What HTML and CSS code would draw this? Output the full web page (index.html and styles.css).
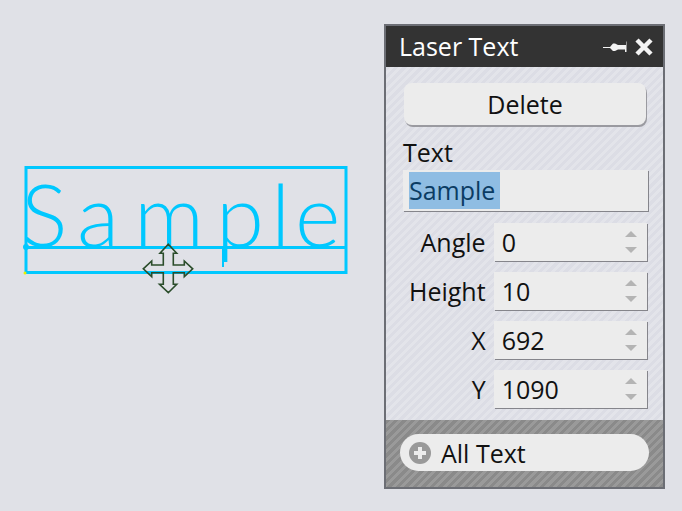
FILE: index.html
```html
<!DOCTYPE html>
<html lang="en">
<head>
<meta charset="utf-8">
<title>Laser Text</title>
<link rel="stylesheet" href="styles.css">
</head>
<body>
<main class="canvas">
  <svg class="drawing" width="682" height="511" viewBox="0 0 682 511" aria-label="Sample laser text on canvas">
    <rect class="frame" x="26" y="167.5" width="320" height="105"/>
    <line class="frame" x1="26" y1="247.5" x2="346" y2="247.5"/>
    <line class="guide" x1="223" y1="248" x2="223" y2="267"/>
    <text class="sample" x="21 77 134 216 271 295" y="247">Sample</text>
    <circle class="origin" cx="26" cy="247" r="3"/>
    <circle class="anchor" cx="25" cy="273" r="1.5"/>
    <path class="move" d="M168.3 244.3L176.7 253.3H173.3V265H184.3V261L192.7 268.8L184.3 276.7V272.7H173.3V284.3H176.7L168.3 292.7L159.5 284.3H163.3V272.7H151.7V276.7L143.3 268.8L151.7 261V265H163.3V253.3H160Z"/>
  </svg>

  <aside class="panel">
    <header class="titlebar">
      <h1 class="title">Laser Text</h1>
      <div class="title-icons">
        <svg class="pin" width="24" height="14" viewBox="0 0 24 14"><path d="M0 7H7L10 3.5H12L15 5H23V1.5H23.500V12H22V9.500H15L12 11H10L7 8H0Z"/></svg>
        <svg class="close" width="20" height="20" viewBox="0 0 20 20"><path d="M3 3L17 17M17 3L3 17"/></svg>
      </div>
    </header>
    <section class="body">
      <button class="delete" type="button">Delete</button>
      <div class="text-field">
        <label class="text-label">Text</label>
        <div class="input text-input"><span class="selected">Sample</span></div>
      </div>
      <div class="rows">
        <div class="row"><span class="row-label">Angle</span><div class="input spin"><span class="value">0</span><span class="arrows"><i class="up"></i><i class="down"></i></span></div></div>
        <div class="row"><span class="row-label">Height</span><div class="input spin"><span class="value">10</span><span class="arrows"><i class="up"></i><i class="down"></i></span></div></div>
        <div class="row"><span class="row-label">X</span><div class="input spin"><span class="value">692</span><span class="arrows"><i class="up"></i><i class="down"></i></span></div></div>
        <div class="row"><span class="row-label">Y</span><div class="input spin"><span class="value">1090</span><span class="arrows"><i class="up"></i><i class="down"></i></span></div></div>
      </div>
    </section>
    <footer class="footer">
      <button class="all-text" type="button">
        <svg class="plus" width="22" height="22" viewBox="0 0 22 22"><circle cx="11" cy="11" r="11"/><path d="M11 5V17M5 11H17"/></svg>
        <span>All Text</span>
      </button>
    </footer>
  </aside>
</main>
</body>
</html>
```

FILE: styles.css
```css
* { box-sizing: border-box; }
html, body { margin: 0; height: 100%; }
body {
  background: #e0e1e7;
  font-family: "Open Sans", "Noto Sans", sans-serif;
  font-size: 25px;
  color: #111;
  overflow: hidden;
}
.canvas { position: relative; width: 682px; height: 511px; }
.drawing { position: absolute; left: 0; top: 0; }
.frame { fill: none; stroke: #00c8ff; stroke-width: 3; }
.guide { stroke: #00c8ff; stroke-width: 2; }
.sample {
  font-family: "Lato", sans-serif;
  font-weight: 300;
  font-size: 87px;
  fill: #00c8ff;
}
.origin { fill: #00c8ff; }
.anchor { fill: #e8f000; }
.move { fill: none; stroke: #2b4d2b; stroke-width: 1.6; }

.panel {
  position: absolute;
  left: 384px;
  top: 24px;
  width: 281px;
  height: 465px;
  border: 2px solid #6c6e75;
  display: flex;
  flex-direction: column;
}
.titlebar {
  height: 41px;
  background: #333;
  color: #fff;
  display: flex;
  align-items: center;
  justify-content: space-between;
  padding: 0 9px 0 13px;
}
.title { margin: 0; font-size: 25px; font-weight: 400; line-height: 1; }
.title-icons { display: flex; align-items: center; gap: 7px; }
.pin path { fill: #f4f4f4; }
.close path { stroke: #f4f4f4; stroke-width: 4.500; fill: none; }

.body {
  height: 353px;
  padding: 16px 16px 0 17px;
  background: repeating-linear-gradient(135deg, #dcdde5 0 3px, #e3e4ea 3px 6px);
}
.delete {
  display: block;
  width: 242px;
  height: 42px;
  margin-left: 1px;
  border: 0;
  border-radius: 8px;
  background: #ececec;
  box-shadow: 1px 2px 0 #9a9aa0;
  font: inherit;
  color: #111;
  padding: 0;
}
.text-field { margin-top: 10px; }
.text-label { display: block; height: 35px; line-height: 35px; }
.input {
  background: #ececec;
  box-shadow: 1px 1px 0 #85858b;
}
.text-input {
  width: 245px;
  height: 41px;
  padding: 2px 6px;
  margin-left: 0;
}
.selected {
  display: block;
  width: 91px;
  height: 37px;
  line-height: 37px;
  background: #8fbde3;
  color: #0b3c63;
}
.rows { margin-top: 12px; display: flex; flex-direction: column; gap: 11px; }
.row { display: flex; align-items: center; height: 38px; }
.row-label { width: 83px; text-align: right; }
.spin {
  width: 154px;
  height: 38px;
  margin-left: 8px;
  display: flex;
  align-items: center;
  justify-content: space-between;
  padding: 0 8px;
}
.arrows { display: flex; flex-direction: column; gap: 10px; padding-right: 2px; }
.arrows i { display: block; width: 0; height: 0; border-left: 6px solid transparent; border-right: 6px solid transparent; }
.up { border-bottom: 6px solid #b4b4b4; }
.down { border-top: 6px solid #b4b4b4; }

.footer {
  flex: 1;
  padding: 14px 14px 0 14px;
  background: repeating-linear-gradient(135deg, #8a8a8a 0 3px, #9a9a9a 3px 6px);
}
.all-text {
  display: flex;
  align-items: center;
  gap: 10px;
  width: 249px;
  height: 37px;
  padding: 0 0 0 9px;
  border: 0;
  border-radius: 19px;
  background: #ececec;
  font: inherit;
  color: #111;
}
.plus circle { fill: #999; }
.plus path { stroke: #ececec; stroke-width: 4; fill: none; }
```
